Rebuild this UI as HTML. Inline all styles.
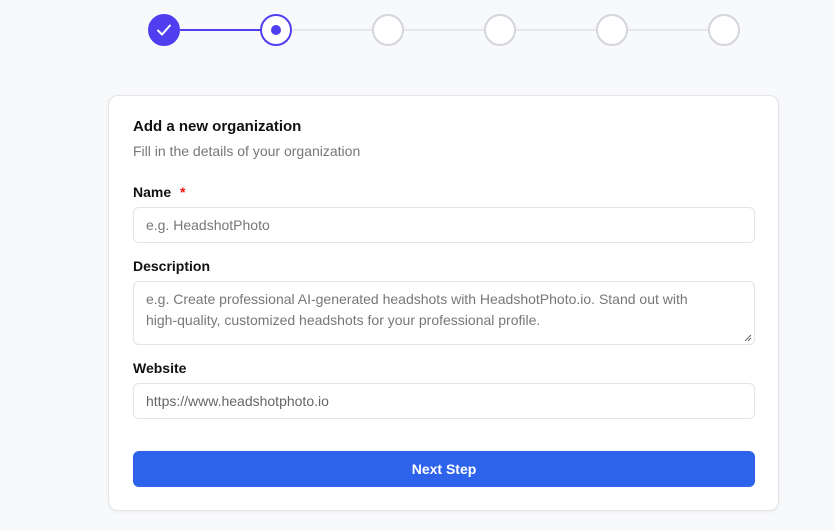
<!DOCTYPE html>
<html><head><meta charset="utf-8"><style>
*{box-sizing:border-box;margin:0;padding:0}
body{width:835px;height:531px;background:#f8f9fb;font-family:"Liberation Sans",sans-serif;position:relative;overflow:hidden}
.line{position:absolute;top:29px;height:2px;background:#e5e7eb}
.c{position:absolute;top:14px;width:32px;height:32px;border-radius:50%;background:#fff;border:2px solid #d4d6dc}
.card{position:absolute;left:108px;top:95px;width:671px;height:416px;background:#fff;border:1px solid #e4e5e8;border-radius:10px;box-shadow:0 1px 3px rgba(0,0,0,.06)}
.t{position:absolute;left:133px;font-size:15px;font-weight:bold;color:#111}
.l{position:absolute;left:133px;font-size:14px;font-weight:bold;color:#111}
.in{position:absolute;left:133px;width:622px;border:1px solid #e3e4e7;border-radius:6px;background:#fff;font-size:14px;color:#777;padding:0 12px;white-space:nowrap}
</style></head><body>
<div class="line" style="left:180px;width:96px;background:#4f3ff0"></div>
<div class="line" style="left:292px;width:432px"></div>
<div class="c" style="left:148px;background:#4f3ff0;border-color:#4f3ff0"><svg width="28" height="28" viewBox="0 0 28 28"><path d="M8 14.5l4 4 8-9" stroke="#fff" stroke-width="2" fill="none" stroke-linecap="round" stroke-linejoin="round"/></svg></div>
<div class="c" style="left:260px;border-color:#4f3ff0"><div style="position:absolute;left:9px;top:9px;width:10px;height:10px;border-radius:50%;background:#4f3ff0"></div></div>
<div class="c" style="left:372px"></div>
<div class="c" style="left:484px"></div>
<div class="c" style="left:596px"></div>
<div class="c" style="left:708px"></div>
<div class="card"></div>
<div class="t" style="top:118px">Add a new organization</div>
<div style="position:absolute;left:133px;top:143px;font-size:14px;color:#777">Fill in the details of your organization</div>
<div class="l" style="top:184px">Name <span style="color:#e11;margin-left:5px">*</span></div>
<div class="in" style="top:207px;height:36px;line-height:34px">e.g. HeadshotPhoto</div>
<div class="l" style="top:258px">Description</div>
<div class="in" style="top:281px;height:64px;line-height:21px;padding-top:7px">e.g. Create professional AI-generated headshots with HeadshotPhoto.io. Stand out with<br>high-quality, customized headshots for your professional profile.<svg style="position:absolute;right:2px;bottom:2px" width="8" height="8" viewBox="0 0 8 8"><path d="M1 7L7 1M4 7L7 4" stroke="#666" stroke-width="1"/></svg></div>
<div class="l" style="top:360px">Website</div>
<div class="in" style="top:383px;height:36px;line-height:34px;color:#666">https://www.headshotphoto.io</div>
<div style="position:absolute;left:133px;top:451px;width:622px;height:36px;background:#2d63ea;border-radius:6px;color:#fff;font-size:14px;font-weight:bold;text-align:center;line-height:36px">Next Step</div>
</body></html>
